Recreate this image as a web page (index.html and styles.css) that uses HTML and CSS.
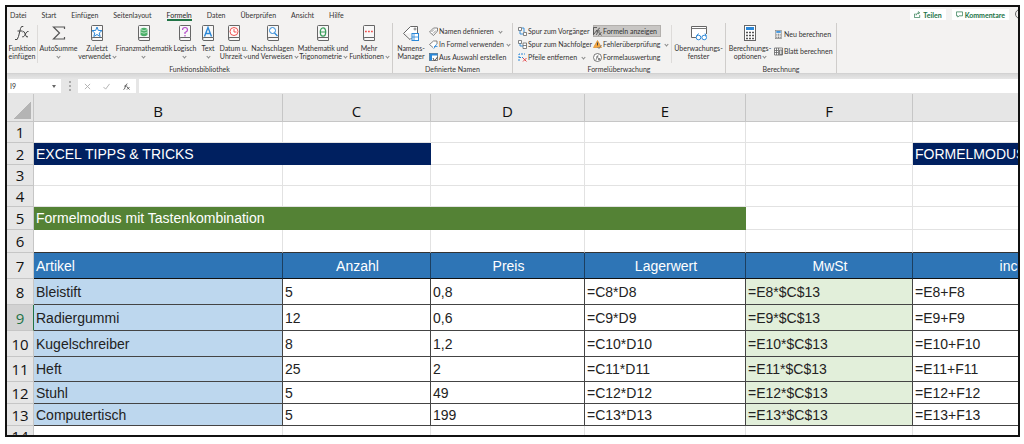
FILE: index.html
```html
<!DOCTYPE html>
<html lang="de">
<head>
<meta charset="utf-8">
<title>Excel Tipps &amp; Tricks</title>
<link rel="stylesheet" href="styles.css">
</head>
<body>
<svg class="defs" aria-hidden="true">
  <symbol id="book" viewBox="0 0 12 16"><path d="M.5 13.500V1.500Q.5.500 1.500.500H11.500V12.500H2Q.5 12.500.5 14T2 15.500H11.500V12.500" fill="#f8f8f8" stroke="#666"/></symbol>
  <symbol id="calc" viewBox="0 0 12 16"><rect x=".5" y=".5" width="11" height="15" fill="#fff" stroke="#666"/><rect x="2" y="2" width="8" height="3" fill="#2b88d8"/><path d="M2 7.500H10M2 10.500H10M2 13.500H10" stroke="#555" stroke-width="1.500" stroke-dasharray="2 1"/></symbol>
</svg>
<main class="window">
  <header class="ribbon">
    <nav class="tabs">
      <button class="tab">Datei</button><button class="tab">Start</button><button class="tab">Einfügen</button><button class="tab">Seitenlayout</button><button class="tab active">Formeln</button><button class="tab">Daten</button><button class="tab">Überprüfen</button><button class="tab">Ansicht</button><button class="tab">Hilfe</button>
      <div class="actions">
        <button class="action"><svg class="mini" viewBox="0 0 8 8"><path d="M2 3.500H.5V7.500H6.500V4.500M2.500 5Q2.500 2 6 2M4.500.500 6.500 2 4.500 3.500" fill="none" stroke="#217346" stroke-width=".8"/></svg>Teilen</button>
        <button class="action"><svg class="mini" viewBox="0 0 8 8"><path d="M.5 1H7.500V5.500H3.500L2 7V5.500H.5Z" fill="none" stroke="#217346" stroke-width=".8"/></svg>Kommentare</button>
        <svg class="smile" viewBox="0 0 10 10"><circle cx="5" cy="5" r="4.500" fill="none" stroke="#666"/></svg>
      </div>
    </nav>
    <div class="groups">
      <section class="group library">
        <div class="tools">
          <button class="tool"><svg class="icon" viewBox="0 0 16 16"><path d="M1 14.500Q3.500 16 4.500 11.500L6.500 3.500Q7.300.5 9.300 1.500M3.500 6H8.500M8.500 7Q10 5.500 10.800 8L12 11Q12.800 13 14 11.500M14.500 6.500Q13 6 12 8L10.500 10.500Q9.500 12.500 8.200 11.800" fill="none" stroke="#444"/></svg><span>Funktion<br>einfügen</span></button>
          <button class="tool divided"><svg class="icon" viewBox="0 0 16 16"><path d="M13.500 4V2H2.500L8.500 8 2.500 14H13.500V12" fill="none" stroke="#555" stroke-width="1.200"/></svg><span>AutoSumme<br><i class="chev"></i></span></button>
          <button class="tool"><svg class="icon" viewBox="0 0 16 16"><use href="#book" x="2" width="12" height="16"/><path d="M8 2 9.300 5.400 13 5.600 10.200 8 11.200 11.500 8 9.500 4.800 11.500 5.800 8 3 5.600 6.700 5.400Z" fill="#fff" stroke="#2b88d8"/></svg><span>Zuletzt<br>verwendet <i class="chev"></i></span></button>
          <button class="tool"><svg class="icon" viewBox="0 0 16 16"><use href="#book" x="2" width="12" height="16"/><path d="M4.500 4V10Q8 12.500 11.500 10V4Q8 1.500 4.500 4Z" fill="#4caf69"/><path d="M4.500 4.500Q8 7 11.500 4.500M4.500 7Q8 9.500 11.500 7" fill="none" stroke="#d5f0dc" stroke-width=".7"/></svg><span>Finanzmathematik<br><i class="chev"></i></span></button>
          <button class="tool"><svg class="icon" viewBox="0 0 16 16"><use href="#book" x="2" width="12" height="16"/><path d="M5.500 5Q5.500 2.500 8 2.500T10.500 5Q10.500 6.500 8 7.500V9M8 10V11.500" fill="none" stroke="#b44bc9" stroke-width="1.200"/></svg><span>Logisch<br><i class="chev"></i></span></button>
          <button class="tool"><svg class="icon" viewBox="0 0 16 16"><use href="#book" x="2" width="12" height="16"/><path d="M4.500 11.500 8 2.500 11.500 11.500M6 8.500H10" fill="none" stroke="#2b88d8" stroke-width="1.400"/></svg><span>Text<br><i class="chev"></i></span></button>
          <button class="tool"><svg class="icon" viewBox="0 0 16 16"><use href="#book" x="2" width="12" height="16"/><circle cx="8" cy="6.500" r="4" fill="#fff" stroke="#ef5350"/><path d="M8 4V7H10.500" fill="none" stroke="#ef5350"/></svg><span>Datum u.<br>Uhrzeit <i class="chev"></i></span></button>
          <button class="tool"><svg class="icon" viewBox="0 0 16 16"><use href="#book" x="2" width="12" height="16"/><circle cx="7.500" cy="5.500" r="3" fill="#fff" stroke="#2b88d8"/><path d="M9.500 8 12.500 11" stroke="#2b88d8" stroke-width="1.300"/></svg><span>Nachschlagen<br>und Verweisen <i class="chev"></i></span></button>
          <button class="tool"><svg class="icon" viewBox="0 0 16 16"><use href="#book" x="2" width="12" height="16"/><ellipse cx="8" cy="7" rx="2.700" ry="4.200" fill="none" stroke="#3a9d5b" stroke-width="1.300"/><path d="M5.500 7H10.500" stroke="#3a9d5b"/></svg><span>Mathematik und<br>Trigonometrie <i class="chev"></i></span></button>
          <button class="tool"><svg class="icon" viewBox="0 0 16 16"><use href="#book" x="2" width="12" height="16"/><path d="M4 6.500H12" stroke="#ef5350" stroke-width="1.600" stroke-dasharray="1.800 1.200"/></svg><span>Mehr<br>Funktionen <i class="chev"></i></span></button>
        </div>
        <h2 class="caption">Funktionsbibliothek</h2>
      </section>
      <section class="group names">
        <div class="tools">
          <button class="tool"><svg class="icon" viewBox="0 0 16 16"><path d="M.5 8.500 7.500 1.500H14.500V8M.5 8.500 7 14.500 8.500 13" fill="#fff" stroke="#666"/><circle cx="12" cy="4" r="1" fill="none" stroke="#666" stroke-width=".8"/><rect x="9" y="8.500" width="6.500" height="7" fill="#fff" stroke="#2b88d8"/><path d="M9 12H15M11 9V15" stroke="#2b88d8" stroke-width=".8"/></svg><span>Namens-<br>Manager</span></button>
          <div class="stack">
            <button class="row"><svg class="small" viewBox="0 0 9 9"><path d="M.5 5 4.500 1H8.500V4L4.500 8.500Z" fill="#fff" stroke="#666" stroke-width=".8"/><path d="M2.500 5 5 2.500M4 6.500 7 3.500" stroke="#777" stroke-width=".8"/></svg>Namen definieren <i class="chev far"></i></button>
            <button class="row"><svg class="small" viewBox="0 0 9 9"><path d="M4 7.500.5 4.500 4.500 1H8V4" fill="#fff" stroke="#666" stroke-width=".8"/><path d="M4.500 8.500Q5.500 8.500 6 6.500T8 4.500M5 6.500H8.500" fill="none" stroke="#2b88d8" stroke-width=".8"/></svg>In Formel verwenden <i class="chev"></i></button>
            <button class="row"><svg class="small" viewBox="0 0 9 9"><rect x=".5" y=".5" width="8" height="7" fill="#fff" stroke="#666" stroke-width=".8"/><path d="M.5.500H3V7.500H.5ZM.5.500H8.500V2.500H.5Z" fill="#2b88d8"/><path d="M4 5 5.500 8 8.500 4" fill="none" stroke="#555"/></svg>Aus Auswahl erstellen</button>
          </div>
        </div>
        <h2 class="caption">Definierte Namen</h2>
      </section>
      <section class="group audit">
        <div class="tools">
          <div class="stack">
            <button class="row"><svg class="small" viewBox="0 0 9 9"><path d="M.5.500H3.500V3.500H.5ZM5.500 5.500H8.500V8.500H5.500Z" fill="#fff" stroke="#666" stroke-width=".8"/><path d="M2 3.500V7H5M4 1H6V5" fill="none" stroke="#2b88d8" stroke-width=".9"/></svg>Spur zum Vorgänger</button>
            <button class="row"><svg class="small" viewBox="0 0 9 9"><path d="M.5.500H3.500V3.500H.5ZM5 3H8.500V8.500H5ZM5 5.500H8.500" fill="#fff" stroke="#666" stroke-width=".8"/><path d="M2 3.500V6H5" fill="none" stroke="#2b88d8" stroke-width=".9"/></svg>Spur zum Nachfolger</button>
            <button class="row"><svg class="small" viewBox="0 0 9 9"><path d="M1 8V1H7M1 4.500H5" fill="none" stroke="#2b88d8" stroke-dasharray="2 1"/><path d="M5 5 8.500 8.500M8.500 5 5 8.500" stroke="#e5484d"/></svg>Pfeile entfernen <i class="chev far"></i></button>
          </div>
          <div class="stack">
            <button class="row pressed"><svg class="small" viewBox="0 0 9 9"><path d="M.5.500V8M.5.500H4M3 8Q4 8 4.500 4.500T7 1M3 4H7M5.500 5 8.500 8.500M8.500 5 5.500 8.500M1 7 4 3" fill="none" stroke="#444" stroke-width=".8"/></svg>Formeln anzeigen</button>
            <button class="row"><svg class="small" viewBox="0 0 9 9"><path d="M4.500.500 8.500 7.500H.5Z" fill="#f5a742" stroke="#d98218" stroke-width=".6"/><path d="M4.500 2.500V5.500" stroke="#444"/><path d="M4.500 7 6 8.500 8.500 5" fill="none" stroke="#777" stroke-width=".9"/></svg>Fehlerüberprüfung <i class="chev far"></i></button>
            <button class="row"><svg class="small" viewBox="0 0 9 9"><circle cx="4.500" cy="4.500" r="4" fill="#fff" stroke="#555" stroke-width=".8"/><path d="M2.500 7Q3.500 7 4 4.500T5.500 2M3 4H5.500M5 5 7 7M7 5 5 7" fill="none" stroke="#555" stroke-width=".7"/></svg>Formelauswertung</button>
          </div>
          <button class="tool divided"><svg class="icon" viewBox="0 0 16 16"><path d="M6 12.500H.5V1.500H15.500V9" fill="#fff" stroke="#666"/><path d="M.5 3.500H15.500" stroke="#777"/><circle cx="7.500" cy="12.500" r="2.300" fill="#fff" stroke="#2b88d8"/><circle cx="13.200" cy="12.500" r="2.300" fill="#fff" stroke="#2b88d8"/><path d="M5.500 11 7.500 8.500M15.300 11 14 8.500" stroke="#2b88d8"/></svg><span>Überwachungs-<br>fenster</span></button>
        </div>
        <h2 class="caption">Formelüberwachung</h2>
      </section>
      <section class="group compute">
        <div class="tools">
          <button class="tool"><svg class="icon" viewBox="0 0 12 16"><use href="#calc" width="12" height="16"/></svg><span>Berechnungs-<br>optionen <i class="chev"></i></span></button>
          <div class="stack pair">
            <button class="row"><svg class="small" viewBox="0 0 12 16"><use href="#calc" width="12" height="16"/></svg>Neu berechnen</button>
            <button class="row"><svg class="small" viewBox="0 0 9 9"><path d="M.5 1H8.500V8H.5ZM.5 3.500H4M.5 5.500H4M2.500 1V8M4.500 1V8" fill="#fff" stroke="#666" stroke-width=".8"/><path d="M5.500 3H8V7.500H5.500Z" fill="#ddd" stroke="#555" stroke-width=".7"/></svg>Blatt berechnen</button>
          </div>
        </div>
        <h2 class="caption">Berechnung</h2>
      </section>
    </div>
  </header>
  <div class="formulabar">
    <div class="namebox"><input aria-label="Namenfeld" value="I9"><i class="arrow"></i></div>
    <span class="grip"></span>
    <div class="editbuttons">
      <button aria-label="Abbrechen"><svg class="mini" viewBox="0 0 8 8"><path d="M1 1 7 7M7 1 1 7" stroke="#aaa"/></svg></button>
      <button aria-label="Eingeben"><svg class="mini" viewBox="0 0 8 8"><path d="M.5 4.500 3 7 7.500 1" fill="none" stroke="#aaa"/></svg></button>
      <button aria-label="Funktion einfügen"><svg class="mini" viewBox="0 0 8 8"><path d="M.5 7.500Q2 7.500 2.500 4.500T5 .8M1.500 3.500H5M4.500 4.500 7.500 7.500M7.500 4.500 4.500 7.500" fill="none" stroke="#444" stroke-width=".9"/></svg></button>
    </div>
    <input class="formula" aria-label="Bearbeitungsleiste">
  </div>
  <div class="sheet">
    <table class="grid">
      <colgroup><col class="c-num"><col class="c-b"><col class="c-c"><col class="c-d"><col class="c-e"><col class="c-f"><col class="c-g"></colgroup>
      <thead><tr class="letters"><th class="corner"></th><th>B</th><th>C</th><th>D</th><th>E</th><th>F</th><th></th></tr></thead>
      <tbody>
        <tr><th>1</th><td></td><td></td><td></td><td></td><td></td><td></td></tr>
        <tr class="base"><th>2</th><td class="navy" colspan="2">EXCEL TIPPS &amp; TRICKS</td><td></td><td></td><td></td><td class="navy">FORMELMODUS</td></tr>
        <tr><th>3</th><td></td><td></td><td></td><td></td><td></td><td></td></tr>
        <tr><th>4</th><td></td><td></td><td></td><td></td><td></td><td></td></tr>
        <tr class="mid"><th>5</th><td class="green" colspan="4">Formelmodus mit Tastenkombination</td><td></td><td></td></tr>
        <tr class="mid before"><th>6</th><td></td><td></td><td></td><td></td><td></td><td></td></tr>
        <tr class="tall head"><th>7</th><td>Artikel</td><td>Anzahl</td><td>Preis</td><td>Lagerwert</td><td>MwSt</td><td>incl. MwSt</td></tr>
        <tr class="tall data"><th>8</th><td>Bleistift</td><td>5</td><td>0,8</td><td>=C8*D8</td><td>=E8*$C$13</td><td>=E8+F8</td></tr>
        <tr class="tall data current"><th>9</th><td>Radiergummi</td><td>12</td><td>0,6</td><td>=C9*D9</td><td>=E9*$C$13</td><td>=E9+F9</td></tr>
        <tr class="tall data"><th>10</th><td>Kugelschreiber</td><td>8</td><td>1,2</td><td>=C10*D10</td><td>=E10*$C$13</td><td>=E10+F10</td></tr>
        <tr class="upper data"><th>11</th><td>Heft</td><td>25</td><td>2</td><td>=C11*D11</td><td>=E11*$C$13</td><td>=E11+F11</td></tr>
        <tr class="base data"><th>12</th><td>Stuhl</td><td>5</td><td>49</td><td>=C12*D12</td><td>=E12*$C$13</td><td>=E12+F12</td></tr>
        <tr class="base data"><th>13</th><td>Computertisch</td><td>5</td><td>199</td><td>=C13*D13</td><td>=E13*$C$13</td><td>=E13+F13</td></tr>
        <tr><th>14</th><td></td><td></td><td></td><td></td><td></td><td></td></tr>
      </tbody>
    </table>
  </div>
</main>
</body>
</html>
```
FILE: styles.css
```css
* { box-sizing: border-box; }
body { margin: 0; padding: 5px 4px 7px 5px; height: 100vh; background: #fff; font: 7px/8px Lato, "Open Sans", sans-serif; color: #333; }
button, input { font: inherit; color: inherit; border: 0; padding: 0; margin: 0; background: none; outline: 0; }
button { white-space: nowrap; }
.defs { position: absolute; width: 0; height: 0; }
.window { height: 100%; border: 2px solid #111; overflow: hidden; display: flex; flex-direction: column; background: #e6e6e6; }

.ribbon { background: #f3f2f1; flex: none; border-bottom: 1px solid #d2d2d2; }
.tabs { display: flex; gap: 15px; padding-left: 3px; height: 16px; align-items: flex-start; padding-top: 2px; }
.tab { height: 12px; line-height: 10px; border-bottom: 1px solid transparent; }
.tab.active { border-bottom-color: #217346; color: #222; box-shadow: inset 0 -1px #217346; }
.actions { display: flex; gap: 6px; margin-left: auto; flex: none; margin-right: -7px; }
.action { display: flex; align-items: center; gap: 2px; height: 11px; padding: 0 4px; background: #fff; color: #217346; font-weight: 700; }
.mini { width: 7px; height: 7px; flex: none; }
.smile { width: 10px; height: 10px; }

.groups { display: flex; height: 50px; }
.group { display: flex; flex-direction: column; border-right: 1px solid #cfcdcb; height: 50px; flex: none; }
.tools { display: grid; height: 40px; padding-top: 2px; }
.library .tools { grid-template-columns: 30px 42px 36px 58px 24px 22px 29px 49px 52px 40px; padding-right: 3px; }
.names .tools { grid-template-columns: 36px 83px; }
.audit .tools { grid-template-columns: 80px 78px 54px; }
.compute .tools { grid-template-columns: 48px 62px; }
.tool { display: flex; flex-direction: column; align-items: center; gap: 3px; justify-content: flex-start; text-align: center; }
.tool.divided { border-left: 1px solid #dddbd9; }
.icon { width: 16px; height: 16px; flex: none; }
.stack { display: flex; flex-direction: column; gap: 1px; align-items: flex-start; }
.stack.pair { gap: 5px; padding-top: 3px; }
.audit .stack:first-child { padding-left: 5px; }
.row { display: flex; align-items: center; gap: 1px; height: 12px; white-space: pre; }
.row.pressed { background: #c8c6c4; box-shadow: inset 0 0 0 1px #b3b0ad; padding-right: 4px; }
.small { width: 9px; height: 9px; flex: none; }
.caption { margin: auto 0 0; font: inherit; text-align: center; }
.chev { display: inline-block; width: 3px; height: 3px; border: solid #888; border-width: 0 1px 1px 0; transform: rotate(45deg); vertical-align: 1px; }
.chev.far { margin-left: 2px; }

.formulabar { display: flex; flex: none; height: 20px; padding: 5px 0 1px 1px; background: linear-gradient(#d8d8d8, #e6e6e6 5px); }
.namebox { display: flex; align-items: center; width: 53px; background: #fff; padding: 0 5px 0 2px; }
.namebox input { width: 100%; min-width: 0; }
.arrow { border: 2px solid transparent; border-top: 3px solid #666; border-bottom: 0; }
.grip { width: 17px; background: radial-gradient(circle, #aaa 1px, transparent 1px) center / 4px 4px repeat-y; }
.editbuttons { display: flex; width: 58px; background: #fff; justify-content: space-around; align-items: center; }
.editbuttons button { display: flex; }
.formula { flex: 1; min-width: 0; margin-left: 3px; background: #fff; padding: 0 4px; }

.sheet { flex: 1; min-height: 0; overflow: hidden; background: #fff; }
.grid { border-collapse: separate; border-spacing: 0; table-layout: fixed; width: 1142px; font: 14px/18px "Liberation Sans Narrow", "Liberation Sans", sans-serif; color: #222; }
.c-num { width: 27px; }
.c-b { width: 249px; }
.c-c { width: 148px; }
.c-d { width: 154px; }
.c-e { width: 161px; }
.c-f { width: 167px; }
.grid th, .grid td { padding: 0 0 0 2px; height: 21px; border: solid #e2e2e2; border-width: 0 1px 1px 0; white-space: nowrap; overflow: hidden; text-align: left; }
.grid th { padding: 0; background: #e6e6e6; border-color: #c6c6c6; text-align: center; font: 15px/18px "Open Sans", "Noto Sans", sans-serif; color: #111; }
.grid .letters th { height: 28px; padding-top: 6px; }
.letters .corner { background: linear-gradient(135deg, transparent 50%, #b4b4b4 50%) right 2px bottom 2px / 18px 18px no-repeat #e6e6e6; }
.grid .base > * { height: 22px; }
.grid .mid > * { height: 23px; }
.grid .upper > * { height: 25px; }
.grid .tall > * { height: 26px; }
.grid td.navy { background: #002060; border-color: #002060; color: #fff; }
.grid td.green { background: #548235; border-color: #548235; color: #fff; }
.grid .before td { border-bottom-color: #333; }
.grid .head td { background: #2e75b6; color: #fff; border-color: #1c3f60; border-bottom-color: #111; text-align: center; }
.grid .head td:nth-child(2) { text-align: left; }
.grid .data td { border-color: #444; }
.grid .data td:nth-child(2) { background: #bdd7ee; }
.grid .data td:nth-child(6) { background: #e2efda; }
.grid .current th { background: #d2d2d2; color: #217346; border-right-color: #217346; }
```
